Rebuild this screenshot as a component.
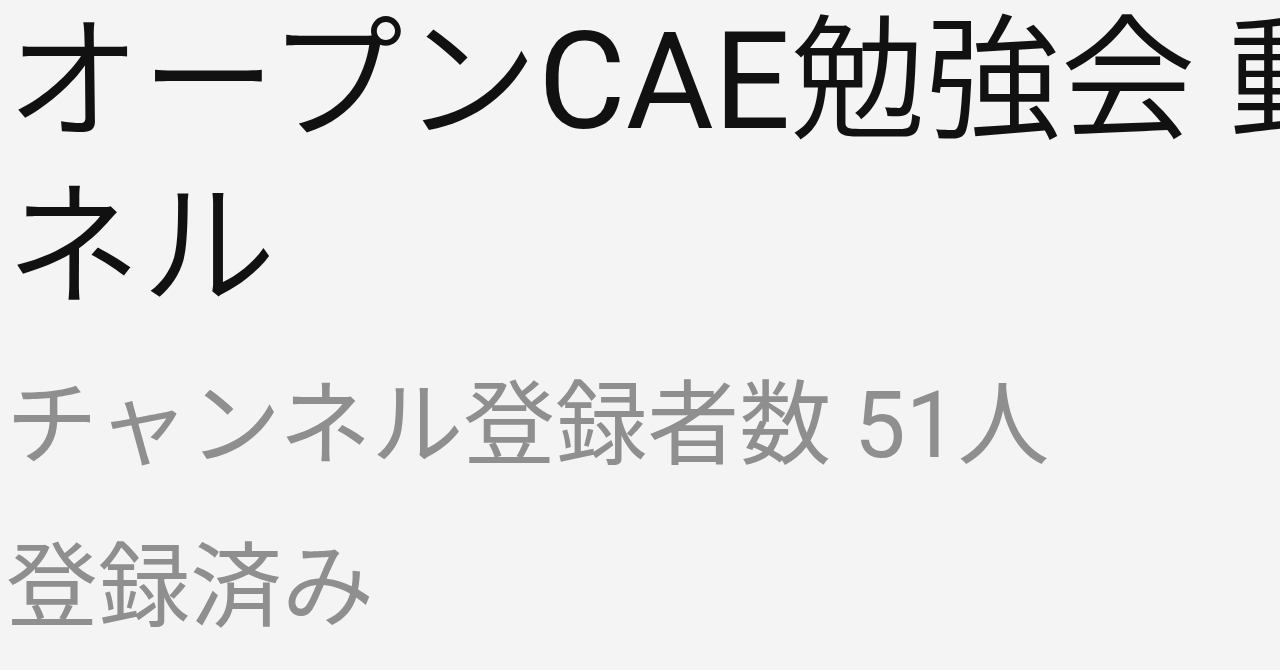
const FONT = "font-['Roboto','Noto_Sans_CJK_JP',sans-serif]";

export default function App() {
  return (
    <div className={`h-[670px] w-full overflow-hidden bg-[#f4f4f4] ${FONT}`}>
      <div className="w-[2000px] pl-[6px]">
        <h1 className="-mt-[1px] text-[135px] font-[350] leading-[166px] text-[#111111]">
          オープン<span className="font-normal">CAE</span>勉強会 動画チャンネル
        </h1>
        <p className="mt-[35px] text-[92px] leading-[120px] text-[#8f8f8f]">
          チャンネル登録者数 51人
        </p>
        <p className="mt-[42px] text-[92px] leading-[120px] text-[#8f8f8f]">
          登録済み
        </p>
      </div>
    </div>
  );
}
